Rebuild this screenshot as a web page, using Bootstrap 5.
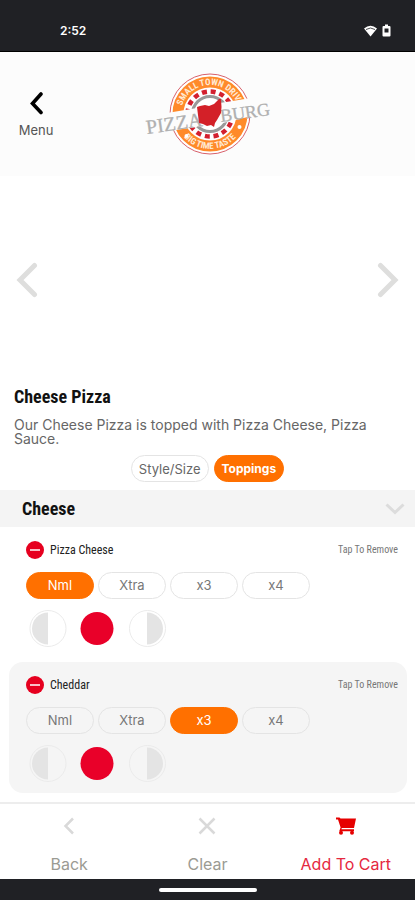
<!DOCTYPE html>
<html lang="en">
<head>
<meta charset="utf-8">
<meta name="viewport" content="width=device-width, initial-scale=1">
<title>Pizza Burg – Cheese Pizza</title>
<link href="https://cdn.jsdelivr.net/npm/bootstrap@5.3.0/dist/css/bootstrap.min.css" rel="stylesheet">
<style>
  :root { --orange: #ff7000; --red: #e90029; --ink: #202125; --line: #e4e4e4; --soft: #f5f5f5; }
  body { font-family: Inter, "Open Sans", sans-serif; font-size: 13px; line-height: 14px; color: #666; background: #fff; }
  svg { display: block; }
  .narrow { font-family: "Roboto Condensed", "Liberation Sans Narrow", "Open Sans Condensed", sans-serif; }
  .status { background: var(--ink); height: 52px; padding: 10px 24px 0 60px; border-bottom: 1px solid #000; color: #fff; font-size: 12px; font-weight: 600; }
  .masthead { background: #fcfcfc; height: 124px; display: grid; grid-template-columns: 1fr 130px 1fr; align-items: center; }
  .menu-link { width: 72px; color: #555; }
  .gallery { height: 208px; padding: 0 16px; }
  .plain { background: none; border: 0; padding: 0; }
  .dish { padding: 0 14px; }
  .dish-name { font-size: 18px; line-height: 26px; font-weight: 700; color: #111; margin: 0 0 8px; }
  .dish-text { font-size: 14px; }
  .tab-pill { height: 27px; padding: 0 7px; border-radius: 14px; border: 1px solid var(--line); background: #fff; color: #666; }
  .tab-pill.active { background: var(--orange); border-color: var(--orange); color: #fff; font-weight: 700; font-size: 12px; }
  .tabs-row { gap: 5px; padding: 9px 0 8px; }
  .section-head { background: #f4f4f4; height: 37px; padding: 0 10px 0 22px; width: 100%; border: 0; color: #111; }
  .section-head span { font-size: 18px; font-weight: 700; }
  .topping { margin: 0 8px 4px 9px; padding: 13px 9px 11px 17px; border: 0; border-radius: 14px; min-width: 0; }
  .topping.filled { background: var(--soft); }
  .topping-head { height: 20px; margin-bottom: 12px; }
  .topping-title { gap: 6px; }
  .topping-name { font-size: 12px; color: #222; }
  .remove { font-size: 10px; line-height: 14px; color: #777; }
  .amounts { gap: 4px; margin-bottom: 11px; }
  .amount { width: 68px; height: 27px; line-height: 25px; text-align: center; border: 1px solid var(--line); border-radius: 14px; color: #777; cursor: pointer; }
  .btn-check:checked + .amount { background: var(--orange); border-color: var(--orange); color: #fff; }
  .sides { gap: 12px; padding-left: 3px; }
  .side { cursor: pointer; }
  .side .ring { fill: none; stroke: #ebebeb; }
  .side .fill { fill: #e4e4e4; }
  .btn-check:checked + .side .ring { stroke: none; }
  .btn-check:checked + .side .fill { fill: var(--red); }
  .actions { border-top: 2px solid #ededed; margin-top: 5px; height: 77px; padding-top: 6px; }
  .action { width: 92px; color: #9b9b93; font-size: 16px; line-height: 18px; gap: 20px; }
  .action.cart { color: #e5283f; }
  .homebar { background: var(--ink); height: 21px; }
  .homebar div { width: 98px; height: 4px; border-radius: 2px; background: #fff; }
</style>
<script src="https://cdn.jsdelivr.net/npm/bootstrap@5.3.0/dist/js/bootstrap.bundle.min.js"></script>
</head>
<body class="d-flex flex-column min-vh-100">

<div class="status d-flex align-items-center justify-content-between">
  <span>2:52</span>
  <span class="d-flex align-items-center gap-1">
    <svg width="15" height="13" viewBox="0 0 15 13"><path d="M1 4.500Q7.500-1 14 4.500L7.500 12.500Z" fill="#fff"/><path d="M3 5.500Q7.500 2.500 12 5.500" fill="none" stroke="#202125" stroke-width=".8"/></svg>
    <svg width="9" height="13" viewBox="0 0 9 13"><path d="M3 0.500h3v1.500h1.500a1 1 0 0 1 1 1v8.500a1 1 0 0 1-1 1h-6a1 1 0 0 1-1-1V3a1 1 0 0 1 1-1H3z" fill="#fff"/><path d="M2.500 4.500h4v4h-4z" fill="#202125"/></svg>
  </span>
</div>

<header class="masthead">
  <a href="#" class="menu-link text-decoration-none d-flex flex-column align-items-center gap-2">
    <svg width="16" height="24" viewBox="0 0 16 24"><path d="M13 3L4.500 12.500l8.500 9" fill="none" stroke="#000" stroke-width="3.600" stroke-linecap="round"/></svg>
    <span>Menu</span>
  </a>
  <svg width="130" height="90" viewBox="0 0 130 90" role="img" aria-label="Pizza Burg">
    <defs>
      <path id="arc-top" d="M38 45a29 29 0 0 1 58 0"/>
      <path id="arc-bottom" d="M32 45a35 35 0 0 0 70 0"/>
    </defs>
    <circle cx="67" cy="45" r="40" fill="#fff" stroke="#d8606a" stroke-width="1"/>
    <circle cx="67" cy="45" r="32" fill="none" stroke="#ff8a2a" stroke-width="11"/>
    <circle cx="67" cy="45" r="22.500" fill="none" stroke="#d3202f" stroke-width="4.500" stroke-dasharray="5 3.836"/>
    <circle cx="67" cy="45" r="17.500" fill="#fff" stroke="#999" stroke-width="3"/>
    <g font-family="Roboto Condensed, sans-serif" font-size="9" font-weight="700" fill="#ffe9d3" text-anchor="middle">
      <text><textPath href="#arc-top" startOffset="50%">SMALL TOWN DRIVE</textPath></text>
      <text><textPath href="#arc-bottom" startOffset="50%">BIG TIME TASTE</textPath></text>
    </g>
    <circle cx="43.500" cy="67" r="2" fill="#fff"/><circle cx="96.500" cy="58" r="2" fill="#fff"/>
    <path d="M24 44L54 39 77 34 108 29 109 47 80 54 54 58 26 62z" fill="#fcfcfc"/>
    <g font-family="Liberation Serif, serif" fill="#b0b0b0" stroke="#b0b0b0" stroke-width=".3">
      <text transform="translate(4 65) rotate(-8)" font-size="20">PIZZA</text>
      <text transform="translate(78 53) rotate(-8)" font-size="18">BURG</text>
    </g>
    <path d="M54 38l3-1 5-1 4 1 5-2 5-5 2 0 .500 8-.500 6-4 7-2 3-1 4-3-2-4 1-4-2-4-1z" fill="#d32028"/>
  </svg>
</header>

<main>
  <div class="gallery d-flex align-items-center justify-content-between">
    <button type="button" class="plain" aria-label="Previous"><svg width="22" height="36" viewBox="0 0 22 36"><path d="M18.500 3.500L4 18l14.500 14.500" fill="none" stroke="#dededd" stroke-width="5" stroke-linecap="round"/></svg></button>
    <button type="button" class="plain" aria-label="Next"><svg width="22" height="36" viewBox="0 0 22 36"><path d="M3.500 3.500L18 18 3.500 32.500" fill="none" stroke="#dededd" stroke-width="5" stroke-linecap="round"/></svg></button>
  </div>

  <div class="dish">
    <h1 class="dish-name narrow">Cheese Pizza</h1>
    <p class="dish-text mb-0">Our Cheese Pizza is topped with Pizza Cheese, Pizza Sauce.</p>
    <div class="tabs-row d-flex justify-content-center">
      <button type="button" class="tab-pill">Style/Size</button>
      <button type="button" class="tab-pill active">Toppings</button>
    </div>
  </div>

  <button type="button" class="section-head d-flex align-items-center justify-content-between">
    <span class="narrow">Cheese</span>
    <svg width="20" height="12" viewBox="0 0 20 12"><path d="M1.500 1.500L10 9.500l8.500-8" fill="none" stroke="#dcdcdc" stroke-width="3"/></svg>
  </button>

  <fieldset class="topping">
    <div class="topping-head d-flex align-items-center justify-content-between narrow">
      <span class="topping-title d-flex align-items-center"><svg width="18" height="18" viewBox="0 0 18 18"><circle cx="9" cy="9" r="9" fill="#e6001f"/><path d="M4 9h10" stroke="#fff" stroke-width="1.500"/></svg><span class="topping-name">Pizza Cheese</span></span>
      <button type="button" class="plain remove">Tap To Remove</button>
    </div>
    <div class="amounts d-flex">
      <input class="btn-check" type="radio" name="pc-amt" id="pc1" checked><label class="amount" for="pc1">Nml</label>
      <input class="btn-check" type="radio" name="pc-amt" id="pc2"><label class="amount" for="pc2">Xtra</label>
      <input class="btn-check" type="radio" name="pc-amt" id="pc3"><label class="amount" for="pc3">x3</label>
      <input class="btn-check" type="radio" name="pc-amt" id="pc4"><label class="amount" for="pc4">x4</label>
    </div>
    <div class="sides d-flex">
      <input class="btn-check" type="radio" name="pc-side" id="pcl"><label class="side" for="pcl" aria-label="Left half"><svg width="38" height="37" viewBox="0 0 38 37"><circle class="ring" cx="19" cy="18.500" r="18"/><path class="fill" d="M19 2.500a16 16 0 0 0 0 32z"/></svg></label>
      <input class="btn-check" type="radio" name="pc-side" id="pcw" checked><label class="side" for="pcw" aria-label="Whole"><svg width="38" height="37" viewBox="0 0 38 37"><circle class="fill" cx="18" cy="18.500" r="16.500"/></svg></label>
      <input class="btn-check" type="radio" name="pc-side" id="pcr"><label class="side" for="pcr" aria-label="Right half"><svg width="38" height="37" viewBox="0 0 38 37"><circle class="ring" cx="18.500" cy="18.500" r="18"/><path class="fill" d="M18 2.500a16 16 0 0 1 0 32z"/></svg></label>
    </div>
  </fieldset>

  <fieldset class="topping filled">
    <div class="topping-head d-flex align-items-center justify-content-between narrow">
      <span class="topping-title d-flex align-items-center"><svg width="18" height="18" viewBox="0 0 18 18"><circle cx="9" cy="9" r="9" fill="#e6001f"/><path d="M4 9h10" stroke="#fff" stroke-width="1.500"/></svg><span class="topping-name">Cheddar</span></span>
      <button type="button" class="plain remove">Tap To Remove</button>
    </div>
    <div class="amounts d-flex">
      <input class="btn-check" type="radio" name="ch-amt" id="ch1"><label class="amount" for="ch1">Nml</label>
      <input class="btn-check" type="radio" name="ch-amt" id="ch2"><label class="amount" for="ch2">Xtra</label>
      <input class="btn-check" type="radio" name="ch-amt" id="ch3" checked><label class="amount" for="ch3">x3</label>
      <input class="btn-check" type="radio" name="ch-amt" id="ch4"><label class="amount" for="ch4">x4</label>
    </div>
    <div class="sides d-flex">
      <input class="btn-check" type="radio" name="ch-side" id="chl"><label class="side" for="chl" aria-label="Left half"><svg width="38" height="37" viewBox="0 0 38 37"><circle class="ring" cx="19" cy="18.500" r="18"/><path class="fill" d="M19 2.500a16 16 0 0 0 0 32z"/></svg></label>
      <input class="btn-check" type="radio" name="ch-side" id="chw" checked><label class="side" for="chw" aria-label="Whole"><svg width="38" height="37" viewBox="0 0 38 37"><circle class="fill" cx="18" cy="18.500" r="16.500"/></svg></label>
      <input class="btn-check" type="radio" name="ch-side" id="chr"><label class="side" for="chr" aria-label="Right half"><svg width="38" height="37" viewBox="0 0 38 37"><circle class="ring" cx="18.500" cy="18.500" r="18"/><path class="fill" d="M18 2.500a16 16 0 0 1 0 32z"/></svg></label>
    </div>
  </fieldset>
</main>

<footer class="mt-auto">
  <div class="actions d-flex justify-content-around align-items-center">
    <button type="button" class="plain action d-flex flex-column align-items-center">
      <svg width="20" height="18" viewBox="0 0 20 18"><path d="M14 1.500L6.500 9l7.500 7.500" fill="none" stroke="#d9d9d9" stroke-width="2.500"/></svg>Back
    </button>
    <button type="button" class="plain action d-flex flex-column align-items-center">
      <svg width="20" height="18" viewBox="0 0 20 18"><path d="M2.500 1.500l15 15M17.500 1.500l-15 15" fill="none" stroke="#d9d9d9" stroke-width="2.500"/></svg>Clear
    </button>
    <button type="button" class="plain action cart text-nowrap d-flex flex-column align-items-center">
      <svg width="20" height="18" viewBox="0 0 20 18"><path d="M0 0.500h3.500l1 1H20l-2 9.500H5.800L5.400 12.300H18v1.900H3.200L4.600 10.500 2 2.500H0z" fill="#e60000"/><circle cx="5" cy="15.800" r="2" fill="#e60000"/><circle cx="16" cy="15.800" r="2" fill="#e60000"/></svg>Add To Cart
    </button>
  </div>
  <div class="homebar d-flex align-items-center justify-content-center"><div></div></div>
</footer>
</body>
</html>
